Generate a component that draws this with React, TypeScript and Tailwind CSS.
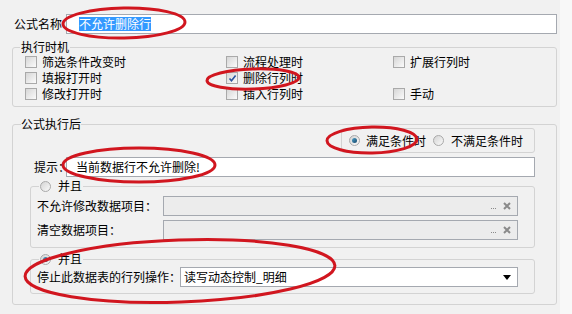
import React from "react";

function Checkbox({ checked = false }: { checked?: boolean }) {
  return (
    <span className="relative flex h-[12px] w-[12px] shrink-0 items-center justify-center border border-[#a9a9a9] bg-gradient-to-br from-[#d6d6d6] to-[#fbfbfb]">
      {checked && (
        <svg width="9" height="9" viewBox="0 0 9 9" className="absolute">
          <path d="M1.5 4.5 L3.5 6.8 L7.6 1.6" fill="none" stroke="#2b55a0" strokeWidth="1.6" />
        </svg>
      )}
    </span>
  );
}

function Radio({ checked = false }: { checked?: boolean }) {
  return (
    <span className="flex h-[11px] w-[11px] shrink-0 items-center justify-center rounded-full border border-[#a9a9a9] bg-gradient-to-br from-[#d4d4d4] to-[#fafafa]">
      {checked && (
        <span className="h-[5px] w-[5px] rounded-full bg-gradient-to-br from-[#4fa3c9] to-[#16476b]" />
      )}
    </span>
  );
}

function CheckItem({ label, checked }: { label?: string; checked?: boolean }) {
  if (!label) return <div className="h-[16px]" />;
  return (
    <div className="flex h-[16px] items-center gap-[5px]">
      <Checkbox checked={checked} />
      <span>{label}</span>
    </div>
  );
}

function PickField() {
  return (
    <div className="flex h-[20px] flex-1 items-center justify-end gap-[7px] border border-[#a5a9b0] bg-[#ececec] pr-[6px] text-[#8a8a8a]">
      <span className="flex gap-[1px] pt-[4px]">
        <span className="h-[1px] w-[1px] bg-[#8a8a8a]" />
        <span className="h-[1px] w-[1px] bg-[#8a8a8a]" />
        <span className="h-[1px] w-[1px] bg-[#8a8a8a]" />
      </span>
      <svg width="8" height="8" viewBox="0 0 8 8">
        <path d="M1 1 L7 7 M7 1 L1 7" stroke="#8a8a8a" strokeWidth="2" />
      </svg>
    </div>
  );
}

const triggers: [string, boolean][][] = [
  [["筛选条件改变时", false], ["流程处理时", false], ["扩展行列时", false]],
  [["填报打开时", false], ["删除行列时", true], ["", false]],
  [["修改打开时", false], ["插入行列时", false], ["手动", false]],
];

export default function App() {
  return (
    <div className="relative flex h-[314px] w-[572px] overflow-hidden font-['Noto_Sans_CJK_SC',sans-serif] text-[12px] leading-[14px] text-black">
      <div className="w-[560px] bg-[#f1f1f1]">
        {/* 公式名称 */}
        <div className="flex items-center pl-[14px] pr-[3px] pt-[14px]">
          <span className="w-[52px] shrink-0">公式名称</span>
          <div className="flex h-[20px] flex-1 items-center border border-[#a5a9b0] bg-white pl-[12px]">
            <span className="bg-[#3399ff] text-white">不允许删除行</span>
          </div>
        </div>

        {/* 执行时机 */}
        <fieldset className="ml-[12px] mt-[6px] w-[545px] rounded-[3px] border border-[#d3d3d3] pb-[4px] pl-[7px]">
          <legend className="px-[1px] leading-[14px]">执行时机</legend>
          <div className="ml-[5px] grid grid-cols-[201px_167px_1fr]">
            {triggers.flat().map(([label, checked], i) => (
              <CheckItem key={i} label={label} checked={checked} />
            ))}
          </div>
        </fieldset>

        {/* 公式执行后 */}
        <fieldset className="ml-[12px] mt-[11px] w-[545px] rounded-[3px] border border-[#d3d3d3] pb-[10px] pl-[8px] pr-[21px]">
          <legend className="leading-[12px]">公式执行后</legend>
          <div className="ml-[9px]">
            <div className="-mt-[2px] flex justify-end">
              <div className="flex h-[25px] w-[194px] items-center rounded-[3px] border border-[#d3d3d3] pl-[7px]">
                <Radio checked />
                <span className="ml-[6px]">满足条件时</span>
                <span className="ml-[7px]">
                  <Radio />
                </span>
                <span className="ml-[7px]">不满足条件时</span>
              </div>
            </div>

            <div className="mt-[4px] flex items-center">
              <span className="ml-[4px] w-[32px] shrink-0 whitespace-nowrap">提示：</span>
              <div className="flex h-[20px] flex-1 items-center border border-[#a5a9b0] bg-white pl-[9px]">
                当前数据行不允许删除!
              </div>
            </div>

            <fieldset className="mt-[3px] rounded-[3px] border border-[#d3d3d3] pb-[7px] pl-[6px] pr-[16px]">
              <legend className="ml-[2px] flex items-center gap-[7px] px-[1px] leading-[12px]">
                <Radio />
                <span>并且</span>
              </legend>
              <div className="mt-[4px] flex items-center">
                <span className="w-[126px] shrink-0 whitespace-nowrap">不允许修改数据项目：</span>
                <PickField />
              </div>
              <div className="mt-[4px] flex items-center">
                <span className="w-[126px] shrink-0 whitespace-nowrap">清空数据项目：</span>
                <PickField />
              </div>
            </fieldset>

            <fieldset className="mt-[5px] rounded-[3px] border border-[#d3d3d3] pb-[6px] pl-[6px] pr-[16px]">
              <legend className="ml-[2px] flex items-center gap-[7px] px-[1px] leading-[12px]">
                <Radio checked />
                <span>并且</span>
              </legend>
              <div className="mt-[2px] flex items-center">
                <span className="w-[143px] shrink-0 whitespace-nowrap">停止此数据表的行列操作：</span>
                <div className="flex h-[20px] flex-1 items-center justify-between border border-[#a5a9b0] bg-white pl-[3px] pr-[6px]">
                  <span>读写动态控制_明细</span>
                  <svg width="8" height="5" viewBox="0 0 8 5">
                    <path d="M0 0 H8 L4 5 Z" fill="#000" />
                  </svg>
                </div>
              </div>
            </fieldset>
          </div>
        </fieldset>
      </div>
      <div className="flex-1 bg-[#f8f8f8]" />

      {/* red annotation marks */}
      <svg className="pointer-events-none absolute left-0 top-0" width="572" height="314" viewBox="0 0 572 314">
        <g fill="none" stroke="#d1161f" strokeWidth="3">
          <ellipse cx="124" cy="23" rx="61" ry="15" transform="rotate(-1 124 23)" />
          <ellipse cx="253" cy="79" rx="46" ry="10" transform="rotate(-2 253 79)" />
          <ellipse cx="372" cy="140" rx="45" ry="13" transform="rotate(-1 372 140)" />
          <ellipse cx="139" cy="165" rx="76" ry="17" />
          <ellipse cx="180" cy="271" rx="155" ry="31" transform="rotate(-2 180 271)" />
        </g>
      </svg>
    </div>
  );
}
